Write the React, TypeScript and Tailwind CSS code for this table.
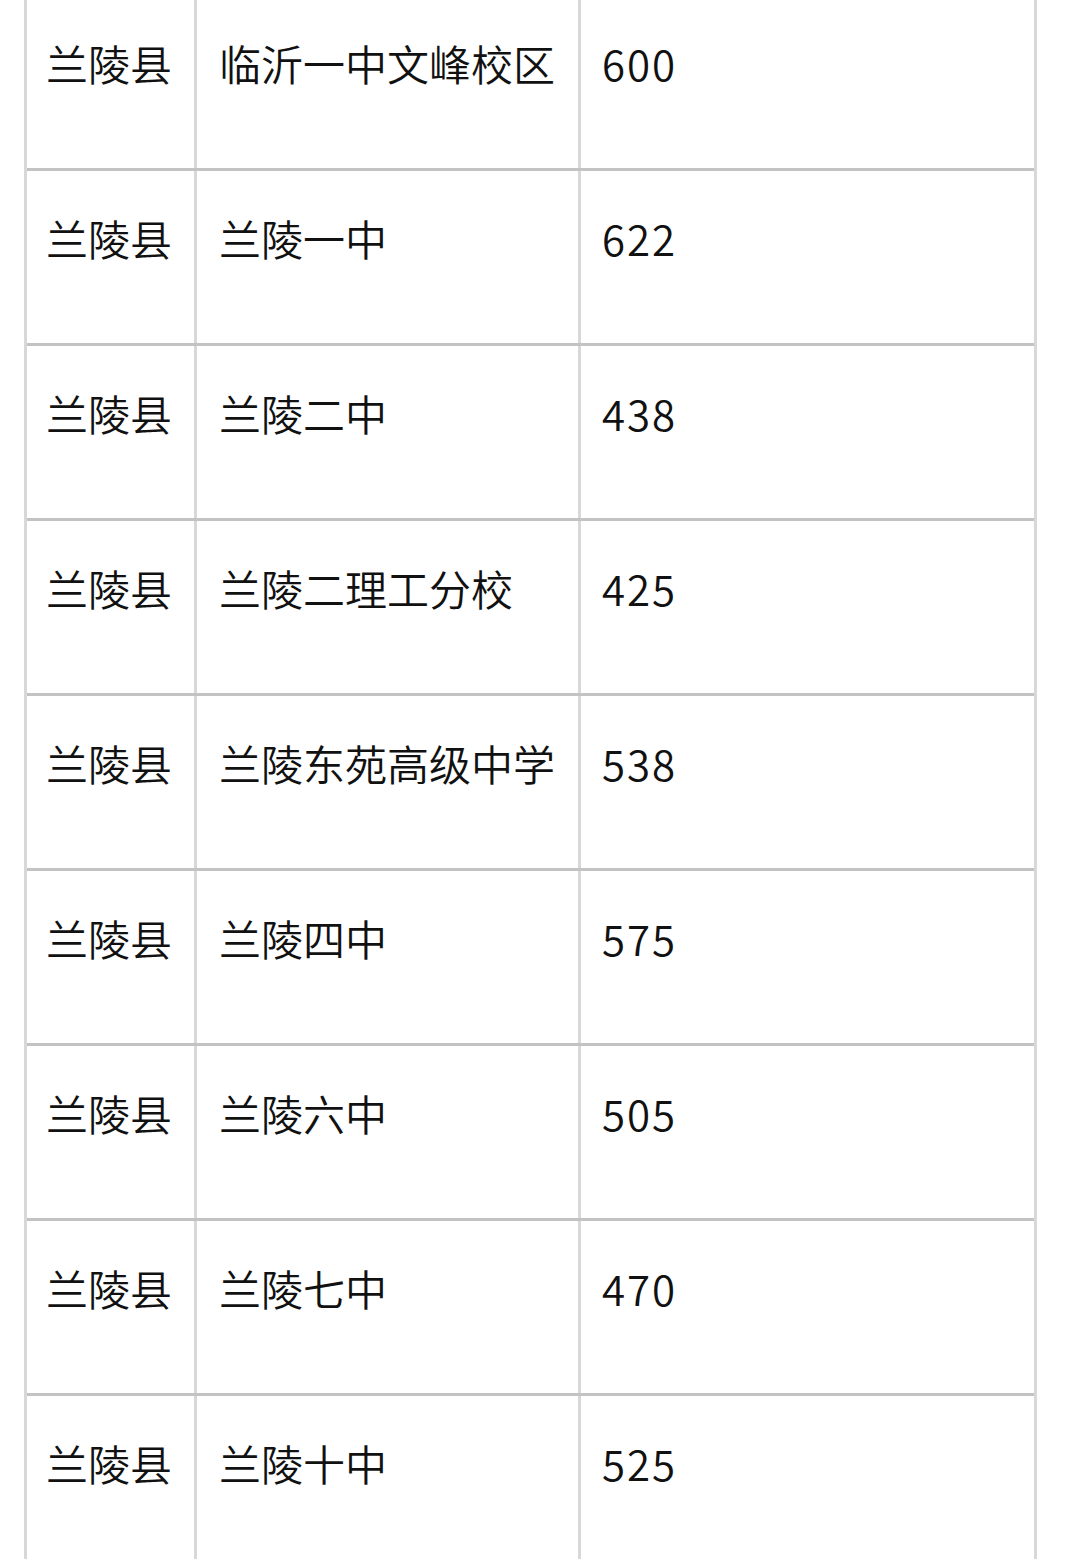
import React from 'react';

const rows: [string, string, string][] = [
  ['兰陵县', '临沂一中文峰校区', '600'],
  ['兰陵县', '兰陵一中', '622'],
  ['兰陵县', '兰陵二中', '438'],
  ['兰陵县', '兰陵二理工分校', '425'],
  ['兰陵县', '兰陵东苑高级中学', '538'],
  ['兰陵县', '兰陵四中', '575'],
  ['兰陵县', '兰陵六中', '505'],
  ['兰陵县', '兰陵七中', '470'],
  ['兰陵县', '兰陵十中', '525'],
];

const font = { fontFamily: '"Noto Sans CJK SC", "Noto Sans", sans-serif' };

export default function App() {
  return (
    <div className="h-[1559px] w-[1080px] overflow-hidden bg-white text-[#111] font-[350]" style={font}>
      <div className="-mt-[7px] ml-[24px] w-[1013px] border-x-[3px] border-[#d8d8d8]">
        {rows.map((r, i) => (
          <div key={i} className="flex h-[175px] border-t-[3px] border-[#c3c3c3]">
            <div className="w-[167px] shrink-0 pl-[19px] pt-[37px] text-[42px] leading-[60px] whitespace-nowrap">{r[0]}</div>
            <div className="w-[384px] shrink-0 border-l-[3px] border-[#d8d8d8] pl-[22px] pt-[37px] text-[42px] leading-[60px] whitespace-nowrap">{r[1]}</div>
            <div className="flex-1 border-l-[3px] border-[#d8d8d8] pl-[21px] pt-[37px] text-[42px] leading-[60px] tracking-[2px]">{r[2]}</div>
          </div>
        ))}
      </div>
    </div>
  );
}
